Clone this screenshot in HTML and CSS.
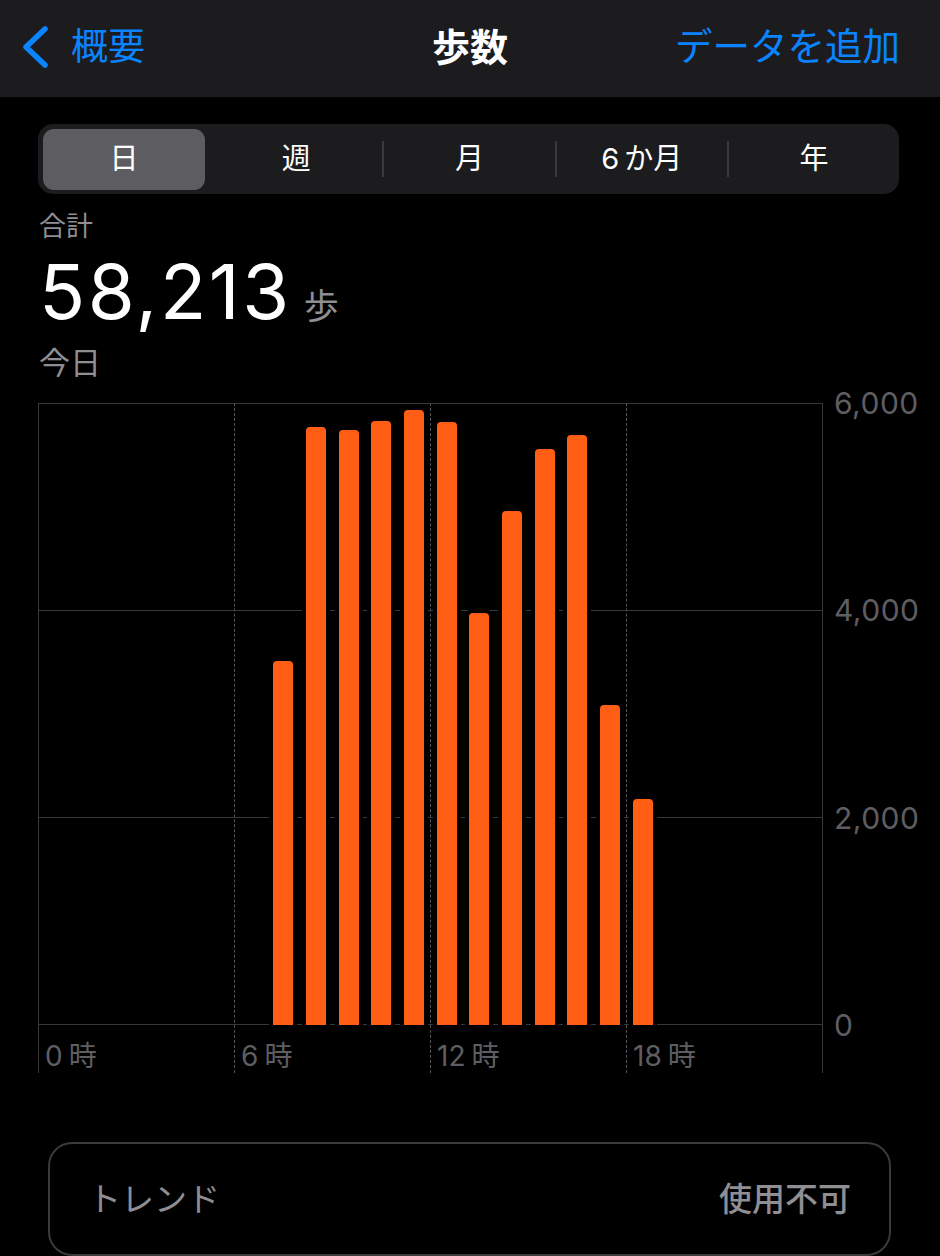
FILE: index.html
```html
<!DOCTYPE html>
<html lang="ja">
<head>
<meta charset="utf-8">
<title>歩数</title>
<link rel="stylesheet" href="styles.css">
</head>
<body>
<header class="nav">
  <a class="nav-back">
    <svg class="chev" viewBox="0 0 30 44" aria-hidden="true"><path d="M25 4 L6 22 L25 40"/></svg>
    <span>概要</span>
  </a>
  <h1 class="nav-title">歩数</h1>
  <a class="nav-action">データを追加</a>
</header>

<nav class="seg">
  <div class="seg-item active">日</div>
  <div class="seg-item">週</div>
  <div class="seg-item sep">月</div>
  <div class="seg-item sep">6<span class="gap">か月</span></div>
  <div class="seg-item sep">年</div>
</nav>

<section class="summary">
  <div class="sum-label">合計</div>
  <div class="sum-value"><span class="sum-num">58,213</span><span class="sum-unit">歩</span></div>
  <div class="sum-date">今日</div>
</section>

<section class="chart">
  <div class="vlines">
    <div class="vcol first"></div>
    <div class="vcol"></div>
    <div class="vcol"></div>
    <div class="vcol last"></div>
  </div>
  <div class="hlines">
    <div class="hrow"></div>
    <div class="hrow"></div>
    <div class="hrow last"></div>
  </div>
  <div class="bars">
    <div class="slot"></div><div class="slot"></div><div class="slot"></div><div class="slot"></div>
    <div class="slot"></div><div class="slot"></div><div class="slot"></div>
    <div class="slot"><div class="bar" style="height:58.6%"></div></div>
    <div class="slot"><div class="bar" style="height:96.1%"></div></div>
    <div class="slot"><div class="bar" style="height:95.7%"></div></div>
    <div class="slot"><div class="bar" style="height:97.1%"></div></div>
    <div class="slot"><div class="bar" style="height:98.9%"></div></div>
    <div class="slot"><div class="bar" style="height:96.9%"></div></div>
    <div class="slot"><div class="bar" style="height:66.3%"></div></div>
    <div class="slot"><div class="bar" style="height:82.7%"></div></div>
    <div class="slot"><div class="bar" style="height:92.6%"></div></div>
    <div class="slot"><div class="bar" style="height:94.8%"></div></div>
    <div class="slot"><div class="bar" style="height:51.5%"></div></div>
    <div class="slot"><div class="bar" style="height:36.3%"></div></div>
    <div class="slot"></div><div class="slot"></div><div class="slot"></div>
    <div class="slot"></div><div class="slot"></div>
  </div>
  <div class="ylabels">
    <span>6,000</span>
    <span>4,000</span>
    <span>2,000</span>
    <span>0</span>
  </div>
  <div class="xlabels">
    <span>0<i>時</i></span>
    <span>6<i>時</i></span>
    <span>12<i>時</i></span>
    <span>18<i>時</i></span>
  </div>
</section>

<section class="trend">
  <span class="trend-label">トレンド</span>
  <span class="trend-value">使用不可</span>
</section>
</body>
</html>
```

FILE: styles.css
```css
* {
  box-sizing: border-box;
  margin: 0;
  padding: 0;
}

html,
body {
  background: #000;
}

body {
  width: 940px;
  height: 1256px;
  overflow: hidden;
  font-family: "Inter", "Noto Sans CJK JP", sans-serif;
  color: #fff;
}

/* ---------- navigation bar ---------- */
.nav {
  height: 97px;
  background: #1c1c1e;
  display: grid;
  grid-template-columns: 1fr auto 1fr;
  align-items: center;
  padding: 0 40px 4px 40px;
}

.nav-back {
  display: flex;
  align-items: center;
  margin-left: -20px;
  color: #0a84ff;
  font-size: 37px;
  line-height: 44px;
}

.chev {
  width: 30px;
  height: 44px;
  margin-right: 21px;
  fill: none;
  stroke: #0a84ff;
  stroke-width: 5.5;
  stroke-linecap: round;
  stroke-linejoin: round;
}

.nav-title {
  font-size: 38px;
  font-weight: 700;
  line-height: 44px;
}

.nav-action {
  justify-self: end;
  color: #0a84ff;
  font-size: 37.5px;
  line-height: 44px;
}

/* ---------- segmented control ---------- */
.seg {
  margin: 27px 41px 0 38px;
  height: 70px;
  background: #1c1c1e;
  border-radius: 15px;
  display: grid;
  grid-template-columns: repeat(5, 1fr);
  align-items: center;
}

.seg-item {
  height: 36px;
  display: flex;
  align-items: center;
  justify-content: center;
  font-size: 29px;
  line-height: 36px;
  color: #fff;
}

.seg-item.sep {
  border-left: 2px solid #3a3a3c;
}

.seg-item.active {
  height: 61px;
  margin: 0 5px;
  background: #5d5d61;
  border-radius: 11px;
}

.gap {
  margin-left: 5px;
}

/* ---------- summary ---------- */
.summary {
  padding: 15px 38px 0 39px;
}

.sum-label {
  font-size: 27px;
  line-height: 36px;
  color: #8e8e93;
}

.sum-value {
  display: flex;
  align-items: baseline;
  height: 80px;
  margin-top: 6px;
}

.sum-num {
  font-size: 76px;
  line-height: 80px;
  font-weight: 400;
  letter-spacing: 2.5px;
}

.sum-unit {
  font-size: 35px;
  line-height: 80px;
  color: #8e8e93;
  margin-left: 12px;
}

.sum-date {
  font-size: 31px;
  line-height: 40px;
  color: #8e8e93;
  margin-top: 12px;
}

/* ---------- chart ---------- */
.chart {
  margin-top: 20px;
  padding-left: 38px;
  display: grid;
  grid-template-columns: 785px 1fr;
  grid-template-rows: 622px 48px;
}

.vlines {
  grid-area: 1 / 1 / 3 / 2;
  display: grid;
  grid-template-columns: 196px 196px 196px 197px;
}

.vcol {
  border-left: 1px dashed #555558;
}

.vcol.first {
  border-left: 1px solid #38383a;
}

.vcol.last {
  border-right: 1px solid #38383a;
}

.hlines {
  grid-area: 1 / 1 / 2 / 2;
  display: grid;
  grid-template-rows: 207px 207px 208px;
}

.hrow {
  border-top: 1px solid #38383a;
}

.hrow.last {
  border-bottom: 1px solid #38383a;
}

.bars {
  grid-area: 1 / 1 / 2 / 2;
  width: 784px;
  display: grid;
  grid-template-columns: repeat(24, 1fr);
}

.slot {
  display: flex;
  align-items: flex-end;
  padding-left: 6.5px;
}

.bar {
  width: 20px;
  background: #ff5e14;
  border-radius: 4px 4px 0 0;
  box-shadow: 0 0 0 4px #000;
}

.ylabels {
  grid-area: 1 / 2 / 2 / 3;
  margin: -18px 0 -18px 0;
  padding-left: 11px;
  display: flex;
  flex-direction: column;
  justify-content: space-between;
  font-size: 30px;
  line-height: 36px;
  letter-spacing: 0.5px;
  color: #5e5e62;
}

.xlabels {
  grid-area: 2 / 1 / 3 / 2;
  display: grid;
  grid-template-columns: 196px 196px 196px 197px;
  padding-top: 13px;
  font-size: 28px;
  line-height: 36px;
  color: #5e5e62;
}

.xlabels span {
  padding-left: 7px;
}

.xlabels i {
  font-style: normal;
  margin-left: 6px;
}

/* ---------- trend card ---------- */
.trend {
  margin: 69px 49px 0 48px;
  height: 114px;
  border: 2px solid #3a3a3c;
  border-radius: 24px;
  display: flex;
  justify-content: space-between;
  align-items: center;
  padding: 0 38px;
  font-size: 33px;
  line-height: 44px;
}

.trend-label {
  color: #8e8e93;
}

.trend-value {
  color: #8e8e93;
  font-weight: 500;
}
```
